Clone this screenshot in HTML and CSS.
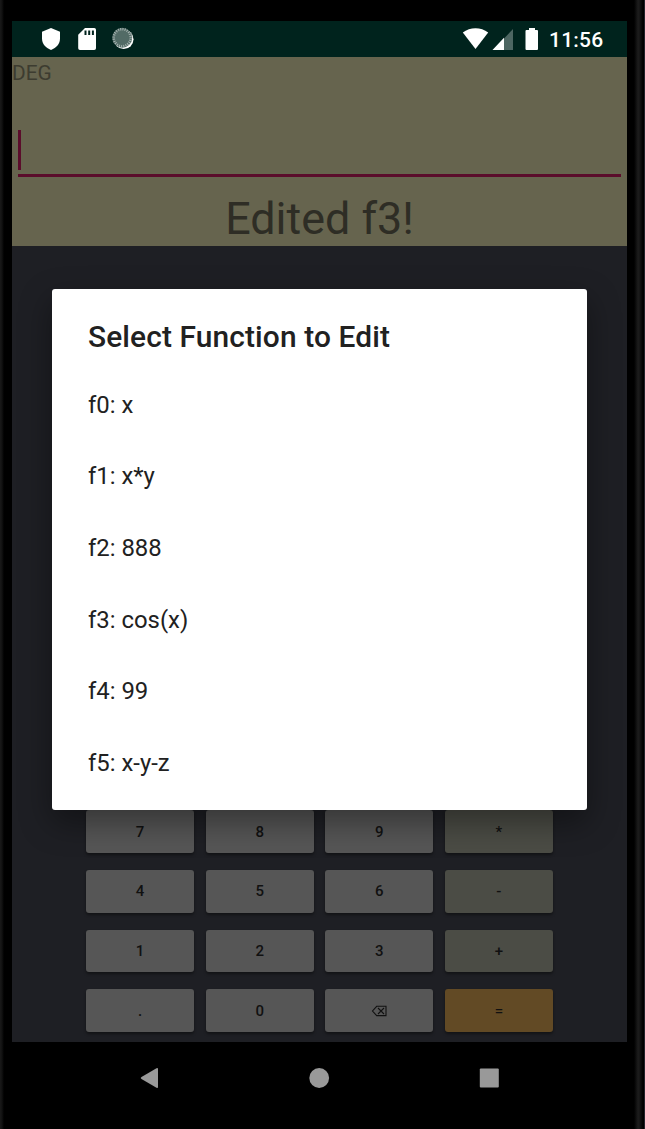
FILE: index.html
```html
<!DOCTYPE html>
<html lang="en">
<head>
<meta charset="utf-8">
<title>Calculator</title>
<link rel="stylesheet" href="styles.css">
</head>
<body>
<div class="device">
  <div class="screen">
    <header class="status-bar">
      <svg class="notifications" width="100" height="36" viewBox="0 0 100 36">
        <path fill="#fff" d="M39 7l9 3.700v6.800c0 5.300-3.600 9.300-9 11.500-5.400-2.200-9-6.200-9-11.500v-6.800z"/>
        <path fill="#fff" fill-rule="evenodd" d="M73 7h9.200q1.800 0 1.800 1.800v18.400q0 1.800-1.800 1.800H68q-1.800 0-1.800-1.800V13.800zM72.500 9.500v4.500h2v-4.500zM76.200 9.500v4.500h2v-4.500zM79.900 9.500v4.500h2v-4.500z"/>
      </svg>
      <svg class="sync" width="24" height="24" viewBox="0 0 24 24">
        <circle cx="11.700" cy="12.300" r="9.800" fill="#fff"/>
        <circle cx="10.200" cy="10.700" r="10" fill="#526b66"/>
        <circle cx="10.200" cy="10.700" r="8.500" fill="none" stroke="#a8b5b2" stroke-width="2.500" stroke-dasharray="1 1.225"/>
      </svg>
      <svg class="system" width="84" height="36" viewBox="0 0 84 36">
        <path fill="#fff" d="M.8 11.500C8 5.700 19 5.700 26.200 11.500L13.500 28z"/>
        <path fill="#4d6662" d="M51 8v21H31z"/>
        <path fill="#fff" d="M42 16.800V29H30.500z"/>
        <path fill="#fff" d="M67 7h6v2h2q1 0 1 1v18q0 1-1 1H64.500q-1 0-1-1V10q0-1 1-1H67z"/>
      </svg>
      <span class="clock">11:56</span>
    </header>
    <section class="display">
      <div class="angle-mode">DEG</div>
      <div class="entry"><span class="caret"></span></div>
      <div class="result">Edited f3!</div>
    </section>
    <main class="keypad">
      <span class="key">7</span><span class="key">8</span><span class="key">9</span><span class="key operator">*</span>
      <span class="key">4</span><span class="key">5</span><span class="key">6</span><span class="key operator">-</span>
      <span class="key">1</span><span class="key">2</span><span class="key">3</span><span class="key operator">+</span>
      <span class="key">.</span><span class="key">0</span>
      <span class="key"><svg width="16" height="12" viewBox="0 0 16 12" fill="none" stroke="#111" stroke-width="1.100"><path d="M5.700 1.300h9.300v9.300H5.700L1.500 6zM7 3l6 6M13 3L7 9"/></svg></span>
      <span class="key equals">=</span>
    </main>
    <nav class="navigation">
      <svg width="615" height="72" viewBox="0 0 615 72" fill="#999">
        <path d="M144.500 26.200q1.500-.8 1.500.8v18q0 1.600-1.500.8l-15-8.700q-1.800-1.100 0-2.200z"/>
        <circle cx="307.200" cy="36" r="9.900"/>
        <rect x="467.800" y="26.400" width="19" height="19" rx="1"/>
      </svg>
    </nav>
  </div>
  <div class="dialog">
    <h1 class="dialog-title">Select Function to Edit</h1>
    <ul class="functions">
      <li>f0: x</li>
      <li>f1: x*y</li>
      <li>f2: 888</li>
      <li>f3: cos(x)</li>
      <li>f4: 99</li>
      <li>f5: x-y-z</li>
    </ul>
  </div>
</div>
</body>
</html>
```
FILE: styles.css
```css
* { box-sizing: border-box; }
body { margin: 0; background: #000; font-family: Roboto, sans-serif; }
.device {
  position: relative;
  width: 645px;
  height: 1129px;
  padding: 21px 18px 0 12px;
  overflow: hidden;
  background:
    linear-gradient(90deg, #191919, #111 2px, #000 4px) left / 5px 100% no-repeat,
    linear-gradient(90deg, #000, #1c1c1c 4px, #1a1a1a 5px, #000 9px, #000 10px, #23232b 10px) right / 11px 100% no-repeat,
    #000;
}
.screen { display: flex; flex-direction: column; width: 615px; }
.status-bar { display: flex; height: 36px; background: #00231d; color: #fff; }
.status-bar svg { flex: none; }
.sync { margin-top: 6px; }
.system { margin-left: 326px; }
.clock { margin-left: 3px; font-size: 21px; font-weight: 500; line-height: 38px; letter-spacing: 0.2px; }
.display { height: 189.4px; background: #66644e; color: #2e2d25; }
.angle-mode { height: 73px; font-size: 20.9px; line-height: 32px; color: #3d3c30; }
.entry { height: 46.6px; margin: 0 6px; border-bottom: 3px solid #5b0c2b; }
.caret { display: block; width: 2.5px; height: 40px; background: #5b0c2b; }
.result { height: 69px; font-size: 44.9px; line-height: 84px; text-align: center; }
.keypad {
  display: grid;
  grid-template-columns: repeat(4, 108px);
  grid-auto-rows: 42.7px;
  align-content: end;
  justify-content: center;
  gap: 17px 11.6px;
  height: 795.6px;
  padding-bottom: 10px;
  background: #1e1f24;
}
.key {
  display: flex;
  align-items: center;
  justify-content: center;
  border-radius: 3px;
  background: #565656;
  color: #111;
  font-size: 15px;
  font-weight: 500;
  box-shadow: 0 2px 3px #0006;
}
.operator { background: #4b4c45; }
.equals { background: #624a25; }
.navigation { height: 72px; }
.dialog {
  position: absolute;
  left: 52px;
  top: 288.6px;
  width: 535px;
  height: 521.4px;
  padding: 27px 36px 0;
  border-radius: 3px;
  background: #fff;
  color: #212121;
  box-shadow: 0 12px 32px #0006;
}
.dialog-title { margin: 0; height: 54px; font-size: 29.9px; font-weight: 500; line-height: 42px; letter-spacing: 0.12px; }
.functions { margin: 0; padding: 0; list-style: none; font-size: 23.9px; line-height: 71.7px; }
```
